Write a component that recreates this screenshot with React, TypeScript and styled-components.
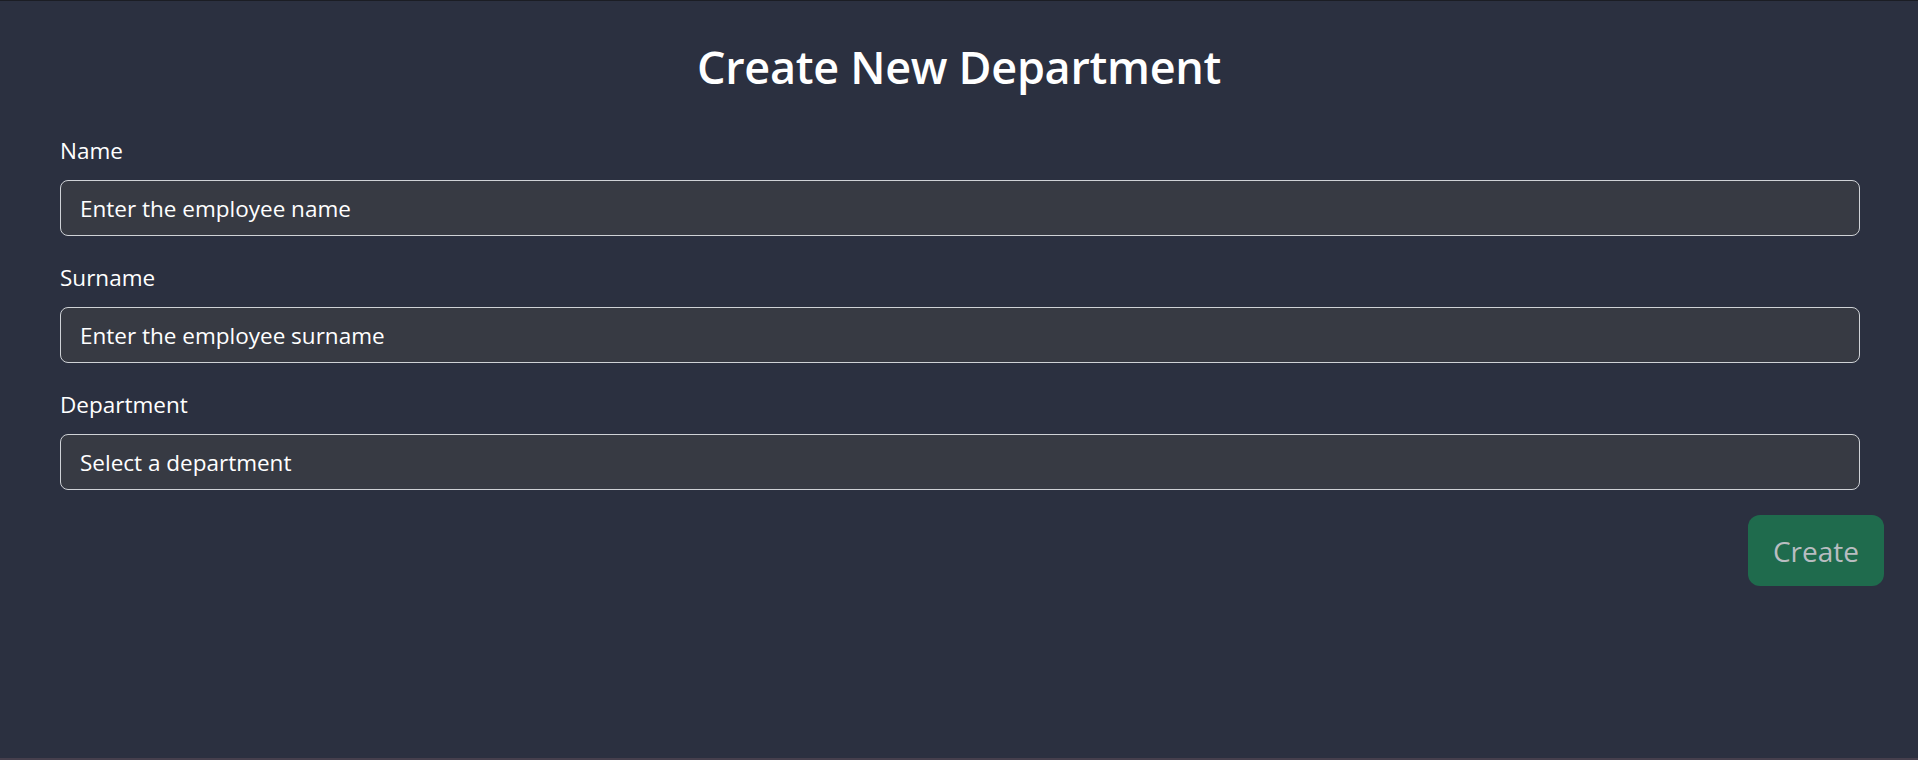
import React from "react";
import styled, { createGlobalStyle } from "styled-components";

const Global = createGlobalStyle`
  html, body { margin: 0; padding: 0; background: #2b3040; }
  body { font-family: "Open Sans", "Noto Sans", sans-serif; color: #ffffff; }
  * { box-sizing: border-box; }
`;

const Page = styled.div`
  height: 760px;
  background: #2b3040;
  border-top: 1px solid #1b1d24;
  border-bottom: 2px solid #463f4d;
  display: flex;
  flex-direction: column;
  padding: 0 34px 0 60px;
`;

const Title = styled.h1`
  margin: 38px 26px 0 0;
  text-align: center;
  font-size: 45px;
  font-weight: 600;
  line-height: 56px;
  letter-spacing: -0.3px;
  color: #ffffff;
`;

const Form = styled.form`
  display: flex;
  flex-direction: column;
  margin-top: 40px;
`;

const Fields = styled.div`
  display: flex;
  flex-direction: column;
  gap: 26px;
  margin-right: 24px;
`;

const Field = styled.div`
  display: flex;
  flex-direction: column;
`;

const Label = styled.label`
  font-size: 22.5px;
  line-height: 32px;
  margin-bottom: 13px;
  color: #ffffff;
`;

const Input = styled.input`
  height: 56px;
  width: 100%;
  padding: 0 19px;
  font-family: inherit;
  font-size: 22.5px;
  color: #ffffff;
  background: #373a43;
  border: 1px solid #cfd2d6;
  border-radius: 8px;
  outline: none;
  &::placeholder { color: #ffffff; opacity: 1; }
`;

const Select = styled.div`
  height: 56px;
  width: 100%;
  padding: 0 19px;
  display: flex;
  align-items: center;
  font-size: 22.5px;
  color: #ffffff;
  background: #373a43;
  border: 1px solid #cfd2d6;
  border-radius: 8px;
`;

const Actions = styled.div`
  display: flex;
  justify-content: flex-end;
  margin-top: 25px;
`;

const Button = styled.button`
  width: 136px;
  height: 71px;
  font-family: inherit;
  font-size: 28px;
  color: #b9bdc1;
  background: #1f6b4d;
  border: none;
  border-radius: 12px;
  cursor: default;
`;

export default function App() {
  return (
    <>
      <Global />
      <Page>
        <Title>Create New Department</Title>
        <Form onSubmit={(e) => e.preventDefault()}>
          <Fields>
            <Field>
              <Label>Name</Label>
              <Input placeholder="Enter the employee name" />
            </Field>
            <Field>
              <Label>Surname</Label>
              <Input placeholder="Enter the employee surname" />
            </Field>
            <Field>
              <Label>Department</Label>
              <Select>Select a department</Select>
            </Field>
          </Fields>
          <Actions>
            <Button type="button" disabled>Create</Button>
          </Actions>
        </Form>
      </Page>
    </>
  );
}
